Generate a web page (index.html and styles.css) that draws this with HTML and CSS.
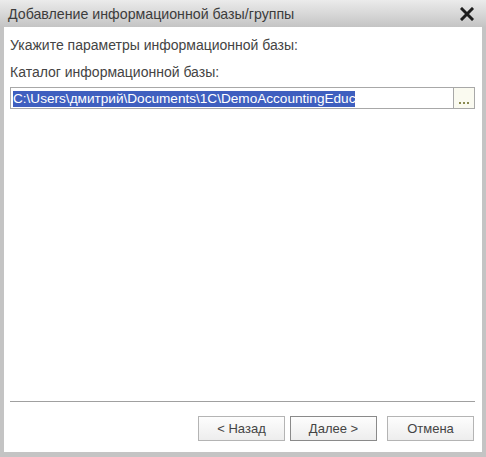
FILE: index.html
```html
<!DOCTYPE html>
<html lang="ru">
<head>
<meta charset="UTF-8">
<title>Добавление информационной базы/группы</title>
<link rel="stylesheet" href="styles.css">
</head>
<body>
    <div class="window">
        <div class="titlebar">
            <span class="title">Добавление информационной базы/группы</span>
            <svg class="close" width="14" height="14" viewBox="0 0 14 14">
                <path d="M2 2 L12 12 M12 2 L2 12" stroke="#1e1e1e" stroke-width="3" stroke-linecap="square"/>
            </svg>
        </div>
        <div class="content">
            <p class="hint">Укажите параметры информационной базы:</p>
            <p class="label">Каталог информационной базы:</p>
            <div class="field">
                <div class="value"><span class="selected">C:\Users\дмитрий\Documents\1C\DemoAccountingEduc</span></div>
                <div class="pick"><i></i><i></i><i></i></div>
            </div>
            <div class="spacer"></div>
            <div class="separator"></div>
            <div class="buttons">
                <a href="#" class="btn">&lt; Назад</a>
                <a href="#" class="btn default">Далее &gt;</a>
                <a href="#" class="btn cancel">Отмена</a>
            </div>
        </div>
    </div>
</body>
</html>
```

FILE: styles.css
```css
html, body {
    margin: 0;
    padding: 0;
}
body {
    font: 14px "Liberation Sans", Arial, sans-serif;
    color: #444;
}
.window {
    width: 486px;
    height: 457px;
    box-sizing: border-box;
    display: flex;
    flex-direction: column;
    background: #c4c4c4;
    padding: 0 4px 5px 4px;
}
.titlebar {
    height: 27px;
    margin: 0 -4px;
    padding: 0 12px 0 8px;
    display: flex;
    align-items: center;
    justify-content: space-between;
    background: linear-gradient(#ebebeb, #d4d4d4 60%, #c4c4c4);
}
.title {
    font-size: 14.2px;
    color: #3c3c3c;
}
.content {
    flex: 1;
    background: #fff;
    display: flex;
    flex-direction: column;
    padding: 11px 7px 6px 6px;
}
.hint,
.label {
    margin: 0;
    line-height: 15px;
}
.label {
    margin-top: 12px;
}
.field {
    margin-top: 7px;
    height: 22px;
    display: flex;
    border: 1px solid #a8a8a8;
    box-sizing: border-box;
}
.value {
    flex: 1;
    padding: 2px 0 0 2px;
}
.selected {
    background: #3f5fbf;
    color: #fff;
    font-size: 13.6px;
    line-height: 16px;
    display: inline-block;
}
.pick {
    width: 21px;
    border-left: 1px solid #a8a8a8;
    background: #fafaf0;
    display: flex;
    align-items: flex-end;
    justify-content: center;
    gap: 2px;
    padding-bottom: 4px;
    box-sizing: border-box;
}
.pick i {
    width: 2px;
    height: 2px;
    background: #8a8a50;
}
.spacer {
    flex: 1;
}
.separator {
    height: 1px;
    background: #a0a0a0;
}
.buttons {
    display: flex;
    justify-content: flex-end;
    gap: 5px;
    margin-top: 14px;
    margin-bottom: 5px;
    padding-right: 1px;
}
.btn {
    width: 87px;
    height: 25px;
    box-sizing: border-box;
    border: 1px solid #b4b4b4;
    background: linear-gradient(#fdfdfd, #ededed);
    color: #444;
    font-size: 13px;
    text-decoration: none;
    display: flex;
    align-items: center;
    justify-content: center;
}
.default {
    border-color: #8a8a8a;
}
.cancel {
    margin-left: 5px;
}
```
